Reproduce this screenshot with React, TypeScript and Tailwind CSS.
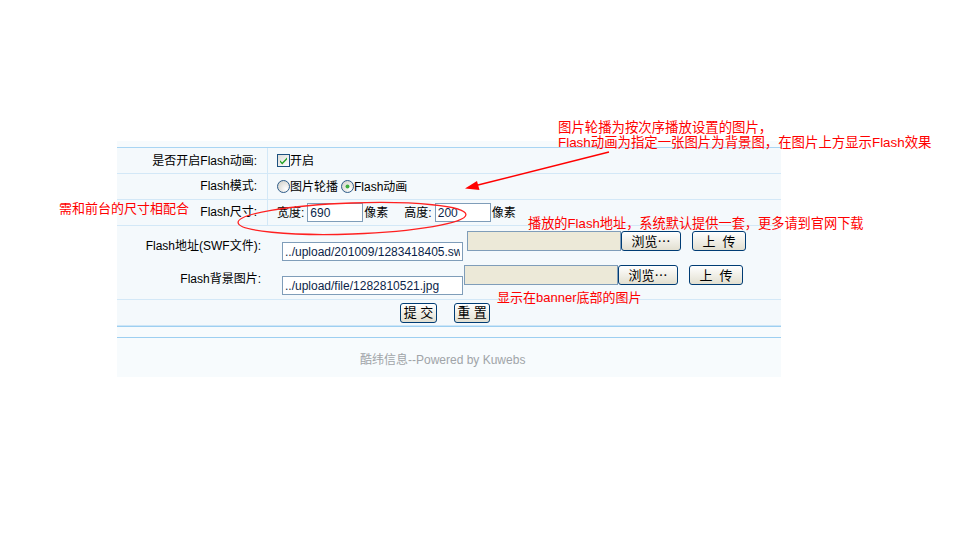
import React from "react";

const font = "font-['Liberation_Sans','Noto_Sans_CJK_SC',sans-serif]";

function CheckBox() {
  return (
    <svg width="13" height="13" viewBox="0 0 13 13" className="shrink-0">
      <defs>
        <linearGradient id="cbg" x1="0" y1="0" x2="1" y2="1">
          <stop offset="0" stopColor="#dcdcd7" />
          <stop offset="1" stopColor="#ffffff" />
        </linearGradient>
      </defs>
      <rect x="0.5" y="0.5" width="12" height="12" fill="url(#cbg)" stroke="#1c5180" />
      <path d="M3 6.2 L5.2 8.6 L10 3.6 L10 5.4 L5.2 10.4 L3 8 Z" fill="#21a121" />
    </svg>
  );
}

function Radio({ checked }: { checked?: boolean }) {
  return (
    <svg width="13" height="13" viewBox="0 0 13 13" className="shrink-0">
      <defs>
        <radialGradient id="rbg" cx="0.7" cy="0.7" r="0.8">
          <stop offset="0" stopColor="#ffffff" />
          <stop offset="1" stopColor="#d4d3cc" />
        </radialGradient>
      </defs>
      <circle cx="6.5" cy="6.5" r="6" fill="url(#rbg)" stroke="#2f5d8a" />
      {checked && <circle cx="6.5" cy="6.5" r="2" fill="#3fae3f" />}
    </svg>
  );
}

function XpButton({ children, w }: { children: React.ReactNode; w: string }) {
  return (
    <button
      className={`${w} h-[20px] shrink-0 rounded-[3px] border border-[#003c74] bg-gradient-to-b from-white to-[#e2dfd0] text-[13px] leading-none text-black`}
    >
      {children}
    </button>
  );
}

function UploadBox({ box }: { box: string }) {
  return (
    <div className="flex">
      <div className={`${box} h-[20px] border border-[#7f9db9] bg-[#ece9d8]`} />
      <XpButton w="w-[60px]">
        浏览<span className="font-['Noto_Sans_CJK_SC',sans-serif]">…</span>
      </XpButton>
      <div className="ml-[11px]">
        <XpButton w="w-[54px]">上&nbsp;&nbsp;传</XpButton>
      </div>
    </div>
  );
}

export default function App() {
  return (
    <div className={`relative h-[547px] w-[960px] overflow-hidden bg-white text-[12px] text-black ${font}`}>
      <div className="pl-[117px] pt-[141px]">
        <div className="w-[664px] bg-[#f4f9fc]">
          <div className="h-[6px] bg-[#f7fbfd]" />

          {/* 开关 */}
          <div className="flex h-[27px] border-y border-t-[#a9d5f3] border-b-[#d3e8f7]">
            <div className="w-[151px] border-r border-[#d3e8f7] pr-[10px] text-right leading-[26px]">是否开启Flash动画:</div>
            <div className="flex items-center pl-[9px]">
              <CheckBox />
              <span>开启</span>
            </div>
          </div>

          {/* 模式 */}
          <div className="flex h-[26px] border-b border-[#d3e8f7]">
            <div className="w-[151px] border-r border-[#d3e8f7] pr-[10px] text-right leading-[25px]">Flash模式:</div>
            <div className="flex items-center pl-[9px]">
              <Radio />
              <span>图片轮播</span>
              <span className="ml-[3px]">
                <Radio checked />
              </span>
              <span>Flash动画</span>
            </div>
          </div>

          {/* 尺寸 */}
          <div className="flex h-[26px] border-b border-[#d3e8f7]">
            <div className="w-[151px] border-r border-[#d3e8f7] pr-[10px] text-right leading-[25px]">Flash尺寸:</div>
            <div className="flex items-center pl-[9px]">
              <span>宽度:</span>
              <input
                readOnly
                value="690"
                className="ml-[3px] h-[19px] w-[56px] border border-[#7f9db9] bg-white px-[2px] text-[12px] text-[#0b1f4a] outline-none"
              />
              <span className="ml-[1px]">像素</span>
              <span className="ml-[16px]">高度:</span>
              <input
                readOnly
                value="200"
                className="ml-[3px] h-[19px] w-[56px] border border-[#7f9db9] bg-white px-[2px] text-[12px] text-[#0b1f4a] outline-none"
              />
              <span className="ml-[1px]">像素</span>
            </div>
          </div>

          {/* 文件 */}
          <div className="border-b border-[#d3e8f7]">
            <div className="flex h-[36px]">
              <div className="mt-[13px] w-[144px] text-right leading-[14px]">Flash地址(SWF文件):</div>
              <input
                readOnly
                value="../upload/201009/1283418405.swf"
                className="ml-[21px] mt-[16px] h-[19px] w-[181px] border border-[#7f9db9] bg-white px-[2px] text-[12px] text-[#0b1f4a] outline-none"
              />
              <div className="ml-[4px] mt-[5px]">
                <UploadBox box="w-[154px]" />
              </div>
            </div>
            <div className="flex h-[37px]">
              <div className="mt-[10px] w-[144px] text-right leading-[14px]">Flash背景图片:</div>
              <input
                readOnly
                value="../upload/file/1282810521.jpg"
                className="ml-[21px] mt-[14px] h-[19px] w-[181px] border border-[#7f9db9] bg-white px-[2px] text-[12px] text-[#0b1f4a] outline-none"
              />
              <div className="ml-[1px] mt-[3px]">
                <UploadBox box="w-[154px]" />
              </div>
            </div>
          </div>

          {/* 提交 */}
          <div className="flex h-[26px] items-center border-b border-[#cde6f7] pl-[283px]">
            <XpButton w="w-[37px]">提&nbsp;交</XpButton>
            <div className="ml-[17px]">
              <XpButton w="w-[36px]">重&nbsp;置</XpButton>
            </div>
          </div>
          <div className="h-[12px] border-y border-[#9dcff1] bg-[#f7fbfd]" />

          <div className="h-[39px] bg-[#f7fbfd] pl-[243px] pt-[15px] leading-[14px] text-[#a0a4a8]">
            酷纬信息--Powered by Kuwebs
          </div>
        </div>
      </div>

      {/* 说明 */}
      <div className="absolute left-[558px] top-[120px] text-[13.4px] leading-[15px] text-[#ff0000]">
        <div>图片轮播为按次序播放设置的图片，</div>
        <div>Flash动画为指定一张图片为背景图，在图片上方显示Flash效果</div>
      </div>
      <div className="absolute left-[59px] top-[201px] text-[13px] leading-[15px] text-[#ff0000]">需和前台的尺寸相配合</div>
      <div className="absolute left-[528px] top-[216px] text-[13.2px] leading-[15px] text-[#ff0000]">
        播放的Flash地址，系统默认提供一套，更多请到官网下载
      </div>
      <div className="absolute left-[497px] top-[290px] text-[13px] leading-[15px] text-[#ff0000]">显示在banner底部的图片</div>

      <svg className="pointer-events-none absolute left-0 top-0" width="960" height="547">
        <line x1="609" y1="152" x2="476" y2="185.5" stroke="#ff0000" strokeWidth="1.4" />
        <polygon points="465,188.5 477,181 479.5,190" fill="#ff0000" />
        <ellipse
          cx="352"
          cy="218.5"
          rx="114"
          ry="15.5"
          fill="none"
          stroke="#ff2020"
          strokeWidth="1.3"
          transform="rotate(-2 352 218.5)"
        />
      </svg>
    </div>
  );
}
